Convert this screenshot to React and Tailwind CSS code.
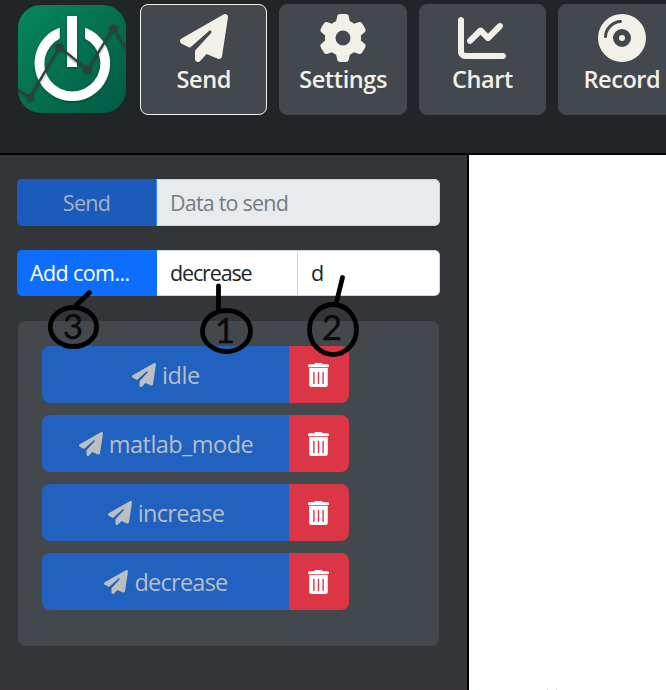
import React from "react";
import { FaPaperPlane, FaGear, FaChartLine, FaCompactDisc } from "react-icons/fa6";

const tabs = [
  { label: "Send", Icon: FaPaperPlane, active: true },
  { label: "Settings", Icon: FaGear },
  { label: "Chart", Icon: FaChartLine },
  { label: "Record", Icon: FaCompactDisc },
];

const commands = [
  { name: "idle", text: "tracking-[-0.4px]" },
  { name: "matlab_mode", text: "tracking-[-0.55px]" },
  { name: "increase", text: "tracking-[-0.65px]" },
  { name: "decrease", text: "tracking-[-0.75px]" },
];

function Logo() {
  return (
    <svg width="108" height="108" viewBox="0 0 108 108" className="block shrink-0">
      <defs>
        <linearGradient id="logoBg" x1="0" y1="0" x2="1" y2="1">
          <stop offset="0" stopColor="#078660" />
          <stop offset="1" stopColor="#015a42" />
        </linearGradient>
        <clipPath id="logoClip">
          <rect width="108" height="108" rx="23" />
        </clipPath>
        <filter id="soft" x="-20%" y="-20%" width="140%" height="140%">
          <feDropShadow dx="0" dy="1" stdDeviation="1" floodColor="#002b20" floodOpacity="0.6" />
        </filter>
      </defs>
      <g clipPath="url(#logoClip)">
        <rect width="108" height="108" fill="url(#logoBg)" />
        <g filter="url(#soft)">
          <path d="M41.7 22.7A37.7 37.7 0 1 0 67 22.7V33.5A28 28 0 1 1 41.7 33.5Z" fill="#fff" />
          <path d="M49 11H59V62H49Z" fill="#fff" />
        </g>
        <g filter="url(#soft)" stroke="#333d3c" fill="#333d3c">
          <path d="M-1 84.5L12 92L41.5 42L69.5 64.5L95.5 23L110 46" fill="none" strokeWidth="2.2" />
          <circle cx="12" cy="92.5" r="3.4" />
          <circle cx="41.5" cy="42" r="3.4" />
          <circle cx="69.5" cy="64.5" r="3.4" />
          <circle cx="95.5" cy="23.5" r="3.4" />
        </g>
      </g>
    </svg>
  );
}

function TrashIcon() {
  return (
    <svg width="22" height="24" viewBox="0 0 22 24" className="block">
      <path
        d="M7.4 0H13.6L15 1.2H20A1.2 1.2 0 0 1 21 2.4V3A1.2 1.2 0 0 1 20 4.2H1.2A1.2 1.2 0 0 1 0 3V2.4A1.2 1.2 0 0 1 1.2 1.2H6Z"
        fill="#fff"
      />
      <path d="M1.2 5.1H19.8V21.5A2.5 2.5 0 0 1 17.3 24H3.7A2.5 2.5 0 0 1 1.2 21.5Z" fill="#fff" />
      <path d="M5.9 9.5V20.5M10.5 9.5V20.5M15.1 9.5V20.5" stroke="#dc3545" strokeWidth="1.4" strokeLinecap="round" />
    </svg>
  );
}

function Annotations() {
  return (
    <svg width="666" height="690" className="pointer-events-none absolute left-0 top-0">
      <g fill="none" stroke="#000" strokeWidth="4.8" strokeLinecap="round">
        <ellipse cx="73.5" cy="327" rx="23.2" ry="19.5" />
        <path d="M75.5 306L89.5 292.5" />
        <ellipse cx="226.5" cy="331" rx="24" ry="20.5" />
        <path d="M218.5 286V310" />
        <ellipse cx="333" cy="329.5" rx="23.5" ry="25" />
        <path d="M336.5 302L342.5 277.5" />
      </g>
      <g fill="#090a0c" stroke="#090a0c" strokeWidth="0.3" fontFamily="Lato, sans-serif" fontSize="35" textAnchor="middle">
        <text x="73" y="339">3</text>
        <text x="225" y="343">1</text>
        <text x="332" y="340">2</text>
      </g>
    </svg>
  );
}

export default function App() {
  return (
    <div className="relative flex h-[690px] w-[666px] flex-col overflow-hidden bg-white font-['Open_Sans','Noto_Sans',sans-serif]">
      <header className="flex h-[155px] shrink-0 items-start gap-[14px] border-b-2 border-black bg-[#212527] pl-[18px] pt-1">
        <div className="pt-px">
          <Logo />
        </div>
        <nav className="flex gap-3">
          {tabs.map(({ label, Icon, active }) => (
            <button
              key={label}
              className={`flex h-[111px] w-[127.4px] shrink-0 flex-col items-center rounded-lg border bg-[#43474e] pt-[9px] text-[#f3f0e8] ${
                active ? "border-[#f3f0e8]" : "border-[#43474e]"
              }`}
            >
              <Icon className="size-12 shrink-0" />
              <span className="-mt-px text-[23.5px] font-semibold leading-9 tracking-[-0.4px]">{label}</span>
            </button>
          ))}
        </nav>
      </header>

      <div className="flex min-h-0 flex-1">
        <aside className="flex w-[469px] flex-col border-r-2 border-black bg-[#343539] pl-[17px] pt-6">
          <div className="flex h-[47px] w-[423px] overflow-hidden rounded-[5px] text-[21.5px]">
            <button className="w-[140px] border-r border-[#3884f5] bg-[#1b5bbb] pt-px tracking-[-0.7px] text-[#a9b2be]">Send</button>
            <div className="flex flex-1 items-center rounded-r-[5px] border border-l-0 border-[#ced4da] bg-[#e8ebee] pl-[13px] pt-px tracking-[-0.8px] text-[#737b83]">
              Data to send
            </div>
          </div>

          <div className="mt-6 flex h-[46px] w-[423px] overflow-hidden rounded-[5px] text-[21.5px] text-[#212529]">
            <button className="w-[140px] bg-[#0d6efd] pl-[13px] text-left tracking-[-0.6px] text-white">Add com...</button>
            <div className="flex w-[141px] items-center border-y border-r border-[#ced4da] bg-white pl-[13px] tracking-[-1.15px]">decrease</div>
            <div className="flex flex-1 items-center rounded-r-[5px] border-y border-r border-[#ced4da] bg-white pl-[13px]">d</div>
          </div>

          <div className="ml-px mt-[25px] flex h-[325px] w-[421px] flex-col gap-3 rounded-lg bg-[#43484d] pl-6 pt-[25px]">
            {commands.map(({ name, text }) => (
              <div key={name} className="flex h-[57px] w-[307px] overflow-hidden rounded-lg">
                <button className={`flex w-[247px] items-center justify-center gap-1.5 bg-[#2161bf] pl-px text-[23.5px] text-[#b9bec5] ${text}`}>
                  <FaPaperPlane className="size-6 text-[#bcbfc2]" />
                  <span className="pt-0.5">{name}</span>
                </button>
                <button className="flex w-[60px] items-center justify-center bg-[#dc3545]">
                  <TrashIcon />
                </button>
              </div>
            ))}
          </div>
          <div className="-ml-[17px] mt-auto h-px bg-[#3a3037]" />
        </aside>
        <main className="flex flex-1 items-end gap-2 bg-white pl-[78px]">
          <span className="h-0.5 w-px bg-[#e4e4e4]" />
          <span className="h-0.5 w-px bg-[#e4e4e4]" />
        </main>
      </div>

      <Annotations />
    </div>
  );
}
